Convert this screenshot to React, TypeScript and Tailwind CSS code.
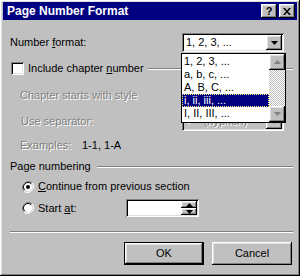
import React from 'react';

const raised =
  'shadow-[inset_-1px_-1px_#000,inset_1px_1px_#fff,inset_-2px_-2px_#808080,inset_2px_2px_#dfdfdf]';
const sunken =
  'shadow-[inset_1px_1px_#808080,inset_-1px_-1px_#fff,inset_2px_2px_#000,inset_-2px_-2px_#dfdfdf]';

function DownArrow({ color = '#000' }: { color?: string }) {
  return (
    <svg width="7" height="4" viewBox="0 0 7 4">
      <path d="M0 0h7L3.5 4z" fill={color} />
    </svg>
  );
}

function UpArrow({ color = '#000' }: { color?: string }) {
  return (
    <svg width="7" height="4" viewBox="0 0 7 4">
      <path d="M0 4h7L3.5 0z" fill={color} />
    </svg>
  );
}

function Radio({ checked }: { checked?: boolean }) {
  return (
    <svg width="12" height="12" viewBox="0 0 12 12">
      <path d="M10.2 1.8A6 6 0 0 0 1.8 10.2" stroke="#808080" strokeWidth="1" fill="none" />
      <path d="M1.8 10.2A6 6 0 0 0 10.2 1.8" stroke="#fff" strokeWidth="1" fill="none" />
      <circle cx="6" cy="6" r="4.5" fill="#fff" />
      <path d="M9.2 2.8A4.5 4.5 0 0 0 2.8 9.2" stroke="#000" strokeWidth="1" fill="none" />
      <path d="M2.8 9.2A4.5 4.5 0 0 0 9.2 2.8" stroke="#dfdfdf" strokeWidth="1" fill="none" />
      {checked && <circle cx="6" cy="6" r="2" fill="#000" />}
    </svg>
  );
}

function Disabled({ children, className = '' }: { children: React.ReactNode; className?: string }) {
  return <span className={`text-[#808080] [text-shadow:1px_1px_#fff] ${className}`}>{children}</span>;
}

export default function App() {
  const items = ['1, 2, 3, ...', 'a, b, c, ...', 'A, B, C, ...', 'i, ii, iii, ...', 'I, II, III, ...'];

  return (
    <div
      className={`relative w-[300px] h-[276px] bg-[#c0c0c0] pt-[2px] px-[3px] text-[11px] text-black ${raised}`}
      style={{ fontFamily: '"Liberation Sans", Arial, sans-serif' }}
    >
      {/* title bar */}
      <div className="h-[18px] bg-[#000080] flex items-center pl-[4px] pr-[2px]">
        <span className="text-white font-bold text-[12px]">Page Number Format</span>
        <div className="ml-auto flex gap-[2px]">
          <div className={`w-[16px] h-[14px] bg-[#c0c0c0] flex items-center justify-center font-bold text-[11px] ${raised}`}>?</div>
          <div className={`w-[16px] h-[14px] bg-[#c0c0c0] flex items-center justify-center ${raised}`}>
            <svg width="8" height="7" viewBox="0 0 8 7">
              <path d="M0 0h2l2 2.5L6 0h2L5 3.5 8 7H6L4 4.5 2 7H0l3-3.5z" fill="#000" />
            </svg>
          </div>
        </div>
      </div>

      <div className="pl-[7px] pr-[4px]">
        {/* number format */}
        <div className="mt-[13px] h-[19px] flex items-center">
          <span>
            Number <span className="underline">f</span>ormat:
          </span>
          <div className={`ml-auto mr-[9px] w-[102px] h-[19px] bg-white flex items-center p-[2px] ${sunken}`}>
            <span className="pl-[2px] flex-1">1, 2, 3, ...</span>
            <div className={`w-[16px] h-[15px] bg-[#c0c0c0] flex items-center justify-center ${raised}`}>
              <DownArrow />
            </div>
          </div>
        </div>

        {/* include chapter number */}
        <div className="mt-[10px] h-[13px] flex items-center">
          <div className={`ml-[1px] w-[13px] h-[13px] bg-white ${sunken}`} />
          <span className="ml-[4px]">
            Include chapter <span className="underline">n</span>umber
          </span>
          <div className="flex-1 ml-[4px] border-t border-t-[#808080] border-b border-b-white" />
        </div>

        <div className="mt-[11px] h-[19px] flex items-center pl-[10px]">
          <Disabled>Chapter starts with style</Disabled>
        </div>

        <div className="mt-[7px] h-[19px] flex items-center pl-[11px]">
          <Disabled>Use separator:</Disabled>
          <div className={`ml-auto mr-[9px] w-[102px] h-[19px] bg-[#c0c0c0] flex items-center p-[2px] ${sunken}`}>
            <Disabled className="pl-[2px] flex-1">
              -<span className="ml-[14px]">(hyphen)</span>
            </Disabled>
            <div className={`w-[16px] h-[15px] bg-[#c0c0c0] flex items-center justify-center ${raised}`}>
              <DownArrow color="#808080" />
            </div>
          </div>
        </div>

        <div className="mt-[8px] h-[13px] flex items-center pl-[10px]">
          <Disabled className="w-[62px]">Examples:</Disabled>
          <span>1-1, 1-A</span>
        </div>

        {/* page numbering */}
        <div className="mt-[8px] h-[13px] flex items-center">
          <span>Page numbering</span>
          <div className="flex-1 ml-[6px] border-t border-t-[#808080] border-b border-b-white" />
        </div>

        <div className="mt-[7px] h-[13px] flex items-center pl-[12px]">
          <Radio checked />
          <span className="ml-[4px]">
            <span className="underline">C</span>ontinue from previous section
          </span>
        </div>

        <div className="mt-[6px] h-[18px] flex items-center pl-[12px]">
          <Radio />
          <span className="ml-[4px] w-[88px]">
            Start <span className="underline">a</span>t:
          </span>
          <div className={`w-[73px] h-[18px] bg-white flex justify-end p-[2px] ${sunken}`}>
            <div className="w-[16px] flex flex-col">
              <div className={`flex-1 bg-[#c0c0c0] flex items-center justify-center ${raised}`}>
                <UpArrow />
              </div>
              <div className={`flex-1 bg-[#c0c0c0] flex items-center justify-center ${raised}`}>
                <DownArrow />
              </div>
            </div>
          </div>
        </div>

        <div className="mt-[14px] border-t border-t-[#808080] border-b border-b-white" />

        <div className="mt-[9px] flex justify-end gap-[8px] pr-[1px]">
          <div className="w-[80px] h-[23px] border border-black">
            <div className={`w-full h-full bg-[#c0c0c0] flex items-center justify-center ${raised}`}>OK</div>
          </div>
          <div className={`w-[80px] h-[23px] bg-[#c0c0c0] flex items-center justify-center ${raised}`}>Cancel</div>
        </div>
      </div>

      {/* open dropdown list */}
      <div className="absolute left-[181px] top-[53px] w-[105px] h-[70px] bg-white border border-black flex">
        <div className="flex-1 pt-[1px]">
          {items.map((it, i) => (
            <div
              key={it}
              className={`h-[13px] leading-[13px] pl-[2px] ${
                i === 3 ? 'bg-[#000080] text-white outline outline-1 outline-dotted outline-[#ffff80] -outline-offset-1' : ''
              }`}
            >
              {it}
            </div>
          ))}
        </div>
        <div className="w-[16px] flex flex-col">
          <div className={`h-[16px] bg-[#c0c0c0] flex items-center justify-center ${raised}`}>
            <UpArrow color="#808080" />
          </div>
          <div className="flex-1 bg-[repeating-conic-gradient(#c0c0c0_0_25%,#fff_0_50%)] bg-[length:2px_2px]" />
          <div className={`h-[16px] bg-[#c0c0c0] flex items-center justify-center ${raised}`}>
            <DownArrow color="#808080" />
          </div>
        </div>
      </div>
    </div>
  );
}
